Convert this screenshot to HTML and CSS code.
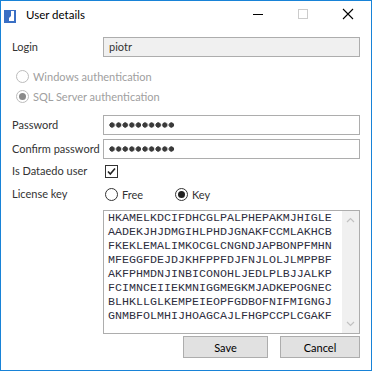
FILE: index.html
```html
<!DOCTYPE html>
<html>
<head>
<meta charset="utf-8">
<link rel="stylesheet" href="styles.css">
</head>
<body>
<div class="window">
  <div class="titlebar">
    <svg class="app-icon" width="12" height="13" viewBox="0 0 12 13">
      <rect width="12" height="13" fill="#3a6fc4"/>
      <path d="M7 1 H10 V11 H5 V8 L6 7 L7 6 Z" fill="#ffffff"/>
    </svg>
    <span class="title">User details</span>
    <div class="controls">
      <span class="ctl"><svg width="12" height="12" viewBox="0 0 12 12"><path d="M1 6.5 H11" stroke="#000" stroke-width="1"/></svg></span>
      <span class="ctl"><svg width="12" height="12" viewBox="0 0 12 12"><rect x="1.5" y="1.5" width="9" height="9" fill="none" stroke="#cccccc" stroke-width="1"/></svg></span>
      <span class="ctl"><svg width="12" height="12" viewBox="0 0 12 12"><path d="M1 1 L11 11 M11 1 L1 11" stroke="#000" stroke-width="1.1"/></svg></span>
    </div>
  </div>
  <div class="content">
    <div class="row r-login">
      <span class="label">Login</span>
      <div class="input readonly">piotr</div>
    </div>
    <div class="auth">
      <div class="radio-line disabled"><span class="radio"></span><span>Windows authentication</span></div>
      <div class="radio-line disabled"><span class="radio checked"></span><span>SQL Server authentication</span></div>
    </div>
    <div class="row r-pass">
      <span class="label">Password</span>
      <div class="input"><span class="dots" aria-label="password"></span></div>
    </div>
    <div class="row r-confirm">
      <span class="label">Confirm password</span>
      <div class="input"><span class="dots" aria-label="password"></span></div>
    </div>
    <div class="row r-check">
      <span class="label">Is Dataedo user</span>
      <div class="field">
        <span class="checkbox"><svg width="11" height="11" viewBox="0 0 11 11"><path d="M2 5.5 L4.3 8 L9 2.5" fill="none" stroke="#222" stroke-width="1.6"/></svg></span>
      </div>
    </div>
    <div class="row r-license">
      <span class="label">License key</span>
      <div class="field license-opts">
        <div class="radio-line opt-free"><span class="radio"></span><span>Free</span></div>
        <div class="radio-line"><span class="radio checked"></span><span>Key</span></div>
      </div>
    </div>
    <div class="row r-key">
      <span class="label"></span>
      <div class="keybox">
        <div class="keytext">HKAMELKDCIFDHCGLPALPHEPAKMJHIGLE<br>AADEKJHJDMGIHLPHDJGNAKFCCMLAKHCB<br>FKEKLEMALIMKOCGLCNGNDJAPBONPFMHN<br>MFEGGFDEJDJKHFPPFDJFNJLOLJLMPPBF<br>AKFPHMDNJINBICONOHLJEDLPLBJJALKP<br>FCIMNCEIIEKMNIGGMEGKMJADKEPOGNEC<br>BLHKLLGLKEMPEIEOPFGDBOFNIFMIGNGJ<br>GNMBFOLMHIJHOAGCAJLFHGPCCPLCGAKF</div>
        <div class="scrollbar">
          <svg width="9" height="6" viewBox="0 0 9 6"><path d="M1 5 L4.5 1.5 L8 5" fill="none" stroke="#c2c2c2" stroke-width="1.2"/></svg>
          <svg width="9" height="6" viewBox="0 0 9 6"><path d="M1 1 L4.5 4.5 L8 1" fill="none" stroke="#c2c2c2" stroke-width="1.2"/></svg>
        </div>
      </div>
    </div>
    <div class="buttons">
      <button class="btn btn-save">Save</button>
      <button class="btn btn-cancel">Cancel</button>
    </div>
  </div>
</div>
</body>
</html>
```
FILE: styles.css
```css
html, body {
  margin: 0;
  padding: 0;
  background: #ffffff;
}
body {
  font-family: Lato, "Noto Sans", sans-serif;
  font-size: 11px;
  color: #333333;
}
.window {
  width: 372px;
  height: 371px;
  box-sizing: border-box;
  border: 1px solid #1883d7;
  background: #ffffff;
  display: flex;
  flex-direction: column;
  overflow: hidden;
}
.titlebar {
  height: 30px;
  display: flex;
  align-items: center;
  flex-shrink: 0;
}
.app-icon {
  margin-left: 3px;
  display: block;
}
.title {
  margin-left: 10px;
  font-size: 11.5px;
  color: #000000;
  margin-top: -3px;
}
.controls {
  margin-left: auto;
  display: flex;
  align-self: flex-start;
  margin-top: 7px;
  margin-right: 17px;
}
.ctl {
  display: block;
  width: 12px;
  height: 12px;
}
.ctl + .ctl {
  margin-left: 33px;
}
.ctl svg {
  display: block;
}
.content {
  padding: 0 11px;
  display: flex;
  flex-direction: column;
}
.row {
  display: grid;
  grid-template-columns: 91px 257px;
  align-items: center;
}
.label {
  line-height: 20px;
  white-space: nowrap;
}
.input {
  height: 20px;
  box-sizing: border-box;
  border: 1px solid #adadad;
  padding: 0 5px;
  line-height: 18px;
  color: #333;
  background: #ffffff;
  display: flex;
  align-items: center;
}
.input.readonly {
  background: #f0f0f0;
}
.dots {
  display: block;
  width: 66px;
  height: 6px;
  background: radial-gradient(circle at 3px 3px, #3a3a3a 2.4px, transparent 2.9px) 0 0 / 6.6px 6px repeat-x;
}
.r-login { margin-top: 6px; }
.auth {
  margin-top: 9px;
  padding-left: 4px;
}
.radio-line {
  display: flex;
  align-items: center;
  height: 20px;
  white-space: nowrap;
}
.radio-line.disabled {
  color: #a0a0a0;
}
.radio {
  width: 13px;
  height: 13px;
  box-sizing: border-box;
  border: 1px solid #333333;
  border-radius: 50%;
  margin-right: 4px;
  display: flex;
  align-items: center;
  justify-content: center;
  background: #fff;
  flex-shrink: 0;
}
.disabled .radio {
  border-color: #bcbcbc;
}
.radio.checked::after {
  content: "";
  width: 7px;
  height: 7px;
  border-radius: 50%;
  background: #222;
}
.disabled .radio.checked::after {
  background: #8a8a8a;
}
.r-pass { margin-top: 9px; }
.r-confirm { margin-top: 4px; }
.r-check { margin-top: 2px; height: 20px; }
.field {
  display: flex;
  align-items: center;
  padding-left: 2px;
}
.checkbox {
  width: 13px;
  height: 13px;
  box-sizing: border-box;
  border: 1px solid #333;
  display: flex;
  align-items: center;
  justify-content: center;
}
.checkbox svg { display: block; }
.r-license { margin-top: 3px; }
.license-opts .opt-free {
  width: 70px;
}
.r-key {
  margin-top: 6px;
  align-items: stretch;
}
.keybox {
  height: 124px;
  box-sizing: border-box;
  border: 1px solid #adadad;
  display: flex;
}
.keytext {
  flex: 1;
  font-family: "Liberation Mono", "Courier New", monospace;
  font-size: 11.67px;
  line-height: 14px;
  color: #2e2e3e;
  padding: 0 0 0 4px;
  white-space: nowrap;
  overflow: hidden;
}
.scrollbar {
  width: 17px;
  background: #f0f0f0;
  display: flex;
  flex-direction: column;
  align-items: center;
  justify-content: space-between;
  padding: 6px 0;
}
.scrollbar svg { display: block; }
.buttons {
  margin-top: 2px;
  display: flex;
  justify-content: flex-end;
  gap: 12px;
}
.btn {
  height: 22px;
  box-sizing: border-box;
  border: 1px solid #adadad;
  background: #e1e1e1;
  font-family: Lato, "Noto Sans", sans-serif;
  font-size: 11px;
  color: #000;
  padding: 0;
  margin: 0;
}
.btn-save { width: 85px; }
.btn-cancel { width: 80px; }
```
